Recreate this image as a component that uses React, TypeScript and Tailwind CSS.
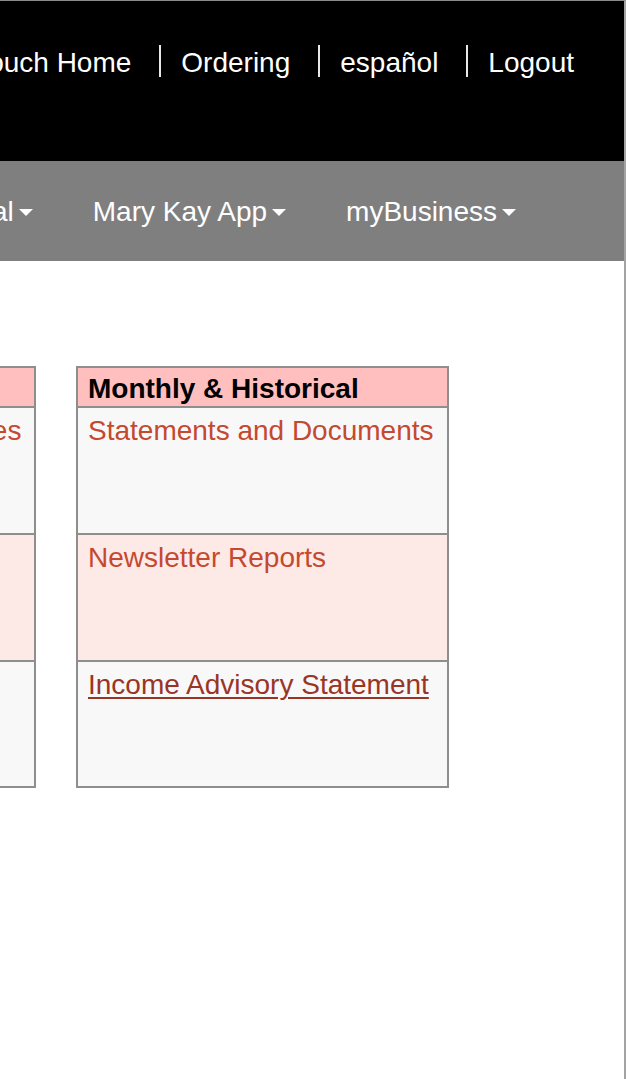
import { ReactNode } from "react";

const topLinks = ["myTouch Home", "Ordering", "español", "Logout"];
const navItems = ["Personal", "Mary Kay App", "myBusiness"];

const Caret = () => (
	<svg width="14" height="8" viewBox="0 0 14 8" className="ml-[5px] mt-[2px] shrink-0">
		<path d="M0 0 L14 0 L7 7 Z" fill="#fff" />
	</svg>
);

const Row = ({ children, pink, last }: { children?: ReactNode; pink?: boolean; last?: boolean }) => (
	<div
		className={`px-[10px] pt-[7px] ${pink ? "bg-[#fdeae7]" : "bg-[#f8f8f8]"} ${
			last ? "h-[124px]" : "h-[127px] border-b-2 border-[#8e8e8e]"
		}`}
	>
		{children}
	</div>
);

const LinkBox = ({ title, links, className }: { title: string; links: ReactNode[]; className: string }) => (
	<div className={`shrink-0 border-2 border-[#8e8e8e] ${className}`}>
		<div className="h-[40px] whitespace-nowrap border-b-2 border-[#8e8e8e] bg-[#ffbfbf] px-[10px] pt-[5px] font-bold text-black">
			{title}
		</div>
		<Row>{links[0]}</Row>
		<Row pink>{links[1]}</Row>
		<Row last>{links[2]}</Row>
	</div>
);

export default function App() {
	return (
		<div
			className="h-[1079px] w-[626px] overflow-hidden border-t border-r-2 border-t-[#8a8a8a] border-r-[#a3a3a3] bg-white text-[28px] leading-8"
			style={{ fontFamily: '"Liberation Sans", Arial, sans-serif' }}
		>
			{/* top utility bar */}
			<div className="flex h-[160px] items-start justify-end overflow-hidden bg-black pr-[50px] pt-[46px] text-white">
				{topLinks.map((t, i) => (
					<div key={t} className="flex shrink-0 items-start">
						{i > 0 && <span className="mr-[20px] mt-[-2px] h-[32px] w-[2px] bg-[#e8e8e8]" />}
						<span className={`whitespace-nowrap ${i < topLinks.length - 1 ? "pr-[28px]" : ""}`}>{t}</span>
					</div>
				))}
			</div>

			{/* main nav */}
			<div className="flex h-[100px] items-start justify-end overflow-hidden bg-[#7f7f7f] pr-[78px] pt-[35px] text-white">
				{navItems.map((n) => (
					<div key={n} className="flex shrink-0 items-center whitespace-nowrap px-[30px]">
						{n}
						<Caret />
					</div>
				))}
			</div>

			{/* report boxes */}
			<div className="ml-[-294px] flex gap-[40px] pt-[105px] text-[#c4492f]">
				<LinkBox
					className="w-[330px]"
					title="Weekly Reports"
					links={[<span className="whitespace-nowrap">Order History &amp; Invoices</span>, null, null]}
				/>
				<LinkBox
					className="w-[373px]"
					title="Monthly & Historical"
					links={[
						<span className="whitespace-nowrap">Statements and Documents</span>,
						<span className="whitespace-nowrap">Newsletter Reports</span>,
						<span className="whitespace-nowrap text-[#9a3526] underline decoration-2 underline-offset-[3px]">
							Income Advisory Statement
						</span>,
					]}
				/>
			</div>
		</div>
	);
}
